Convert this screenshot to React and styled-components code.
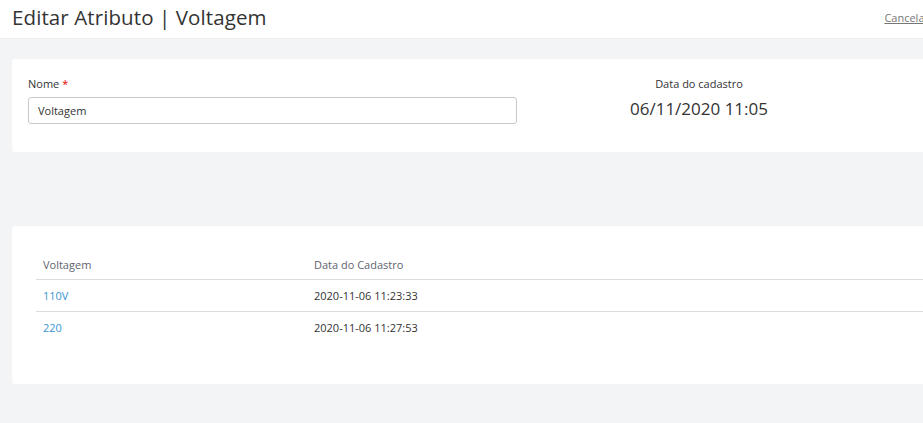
import React from "react";
import styled, { createGlobalStyle } from "styled-components";

const GlobalStyle = createGlobalStyle`
  html, body {
    margin: 0;
    padding: 0;
    background: #f3f4f6;
    overflow: hidden;
  }
  body {
    font-family: "Open Sans", "Noto Sans", sans-serif;
    color: #333;
  }
`;

const Page = styled.div`
  width: 980px;
  min-height: 423px;
  background: #f3f4f6;
`;

const Header = styled.header`
  height: 39px;
  background: #fff;
  display: flex;
  align-items: center;
  justify-content: space-between;
  padding: 0 51px 0 12px;
  border-bottom: 1px solid #eceef1;
  box-sizing: border-box;
`;

const Title = styled.h1`
  margin: 0 0 4px;
  font-size: 20.5px;
  font-weight: 400;
  color: #333;
  letter-spacing: 0.1px;
`;

const CancelLink = styled.a`
  font-size: 11px;
  color: #777;
  text-decoration: underline;
  cursor: pointer;
  margin-bottom: 4px;
`;

const Main = styled.main`
  padding: 20px 12px;
  display: flex;
  flex-direction: column;
  gap: 74px;
`;

const Card = styled.section`
  background: #fff;
  border-radius: 3px;
  padding: ${(p) => p.$pad};
`;

const FormGrid = styled.div`
  display: grid;
  grid-template-columns: 489px 200px;
  column-gap: 82px;
`;

const Field = styled.div`
  display: flex;
  flex-direction: column;
`;

const Label = styled.label`
  font-size: 11px;
  line-height: 16px;
  color: #333;
  margin-bottom: 5px;
  span {
    color: #e00;
    margin-left: 3px;
  }
`;

const Input = styled.input`
  height: 27px;
  box-sizing: border-box;
  border: 1px solid #c8c8c8;
  border-radius: 3px;
  padding: 0 9px;
  font-family: inherit;
  font-size: 11px;
  color: #333;
  outline: none;
`;

const DateBox = styled.div`
  display: flex;
  flex-direction: column;
  align-items: center;
`;

const DateLabel = styled.div`
  font-size: 11px;
  line-height: 16px;
  color: #333;
  margin-bottom: 6px;
`;

const DateValue = styled.div`
  font-size: 17px;
  line-height: 22px;
  color: #333;
`;

const Table = styled.table`
  width: 100%;
  border-collapse: collapse;
  font-size: 11px;
`;

const Th = styled.th`
  text-align: left;
  font-weight: 400;
  color: #5f6470;
  height: 29px;
  padding: 0 7px;
  border-bottom: 1px solid #dcdcdc;
  width: ${(p) => p.$w || "auto"};
`;

const Td = styled.td`
  height: 31px;
  padding: 0 7px;
  color: #333;
  border-bottom: ${(p) => (p.$last ? "none" : "1px solid #dcdcdc")};
`;

const RowLink = styled.a`
  color: #3a94d3;
  text-decoration: none;
  cursor: pointer;
`;

const rows = [
  { name: "110V", date: "2020-11-06 11:23:33" },
  { name: "220", date: "2020-11-06 11:27:53" },
];

export default function App() {
  return (
    <Page>
      <GlobalStyle />
      <Header>
        <Title>Editar Atributo | Voltagem</Title>
        <CancelLink>Cancelar</CancelLink>
      </Header>
      <Main>
        <Card $pad="17px 16px 28px">
          <FormGrid>
            <Field>
              <Label>
                Nome<span>*</span>
              </Label>
              <Input defaultValue="Voltagem" />
            </Field>
            <DateBox>
              <DateLabel>Data do cadastro</DateLabel>
              <DateValue>06/11/2020 11:05</DateValue>
            </DateBox>
          </FormGrid>
        </Card>
        <Card $pad="24px 24px 41px">
          <Table>
            <thead>
              <tr>
                <Th $w="257px">Voltagem</Th>
                <Th>Data do Cadastro</Th>
              </tr>
            </thead>
            <tbody>
              {rows.map((r, i) => (
                <tr key={r.name}>
                  <Td $last={i === rows.length - 1}>
                    <RowLink>{r.name}</RowLink>
                  </Td>
                  <Td $last={i === rows.length - 1}>{r.date}</Td>
                </tr>
              ))}
            </tbody>
          </Table>
        </Card>
      </Main>
    </Page>
  );
}
